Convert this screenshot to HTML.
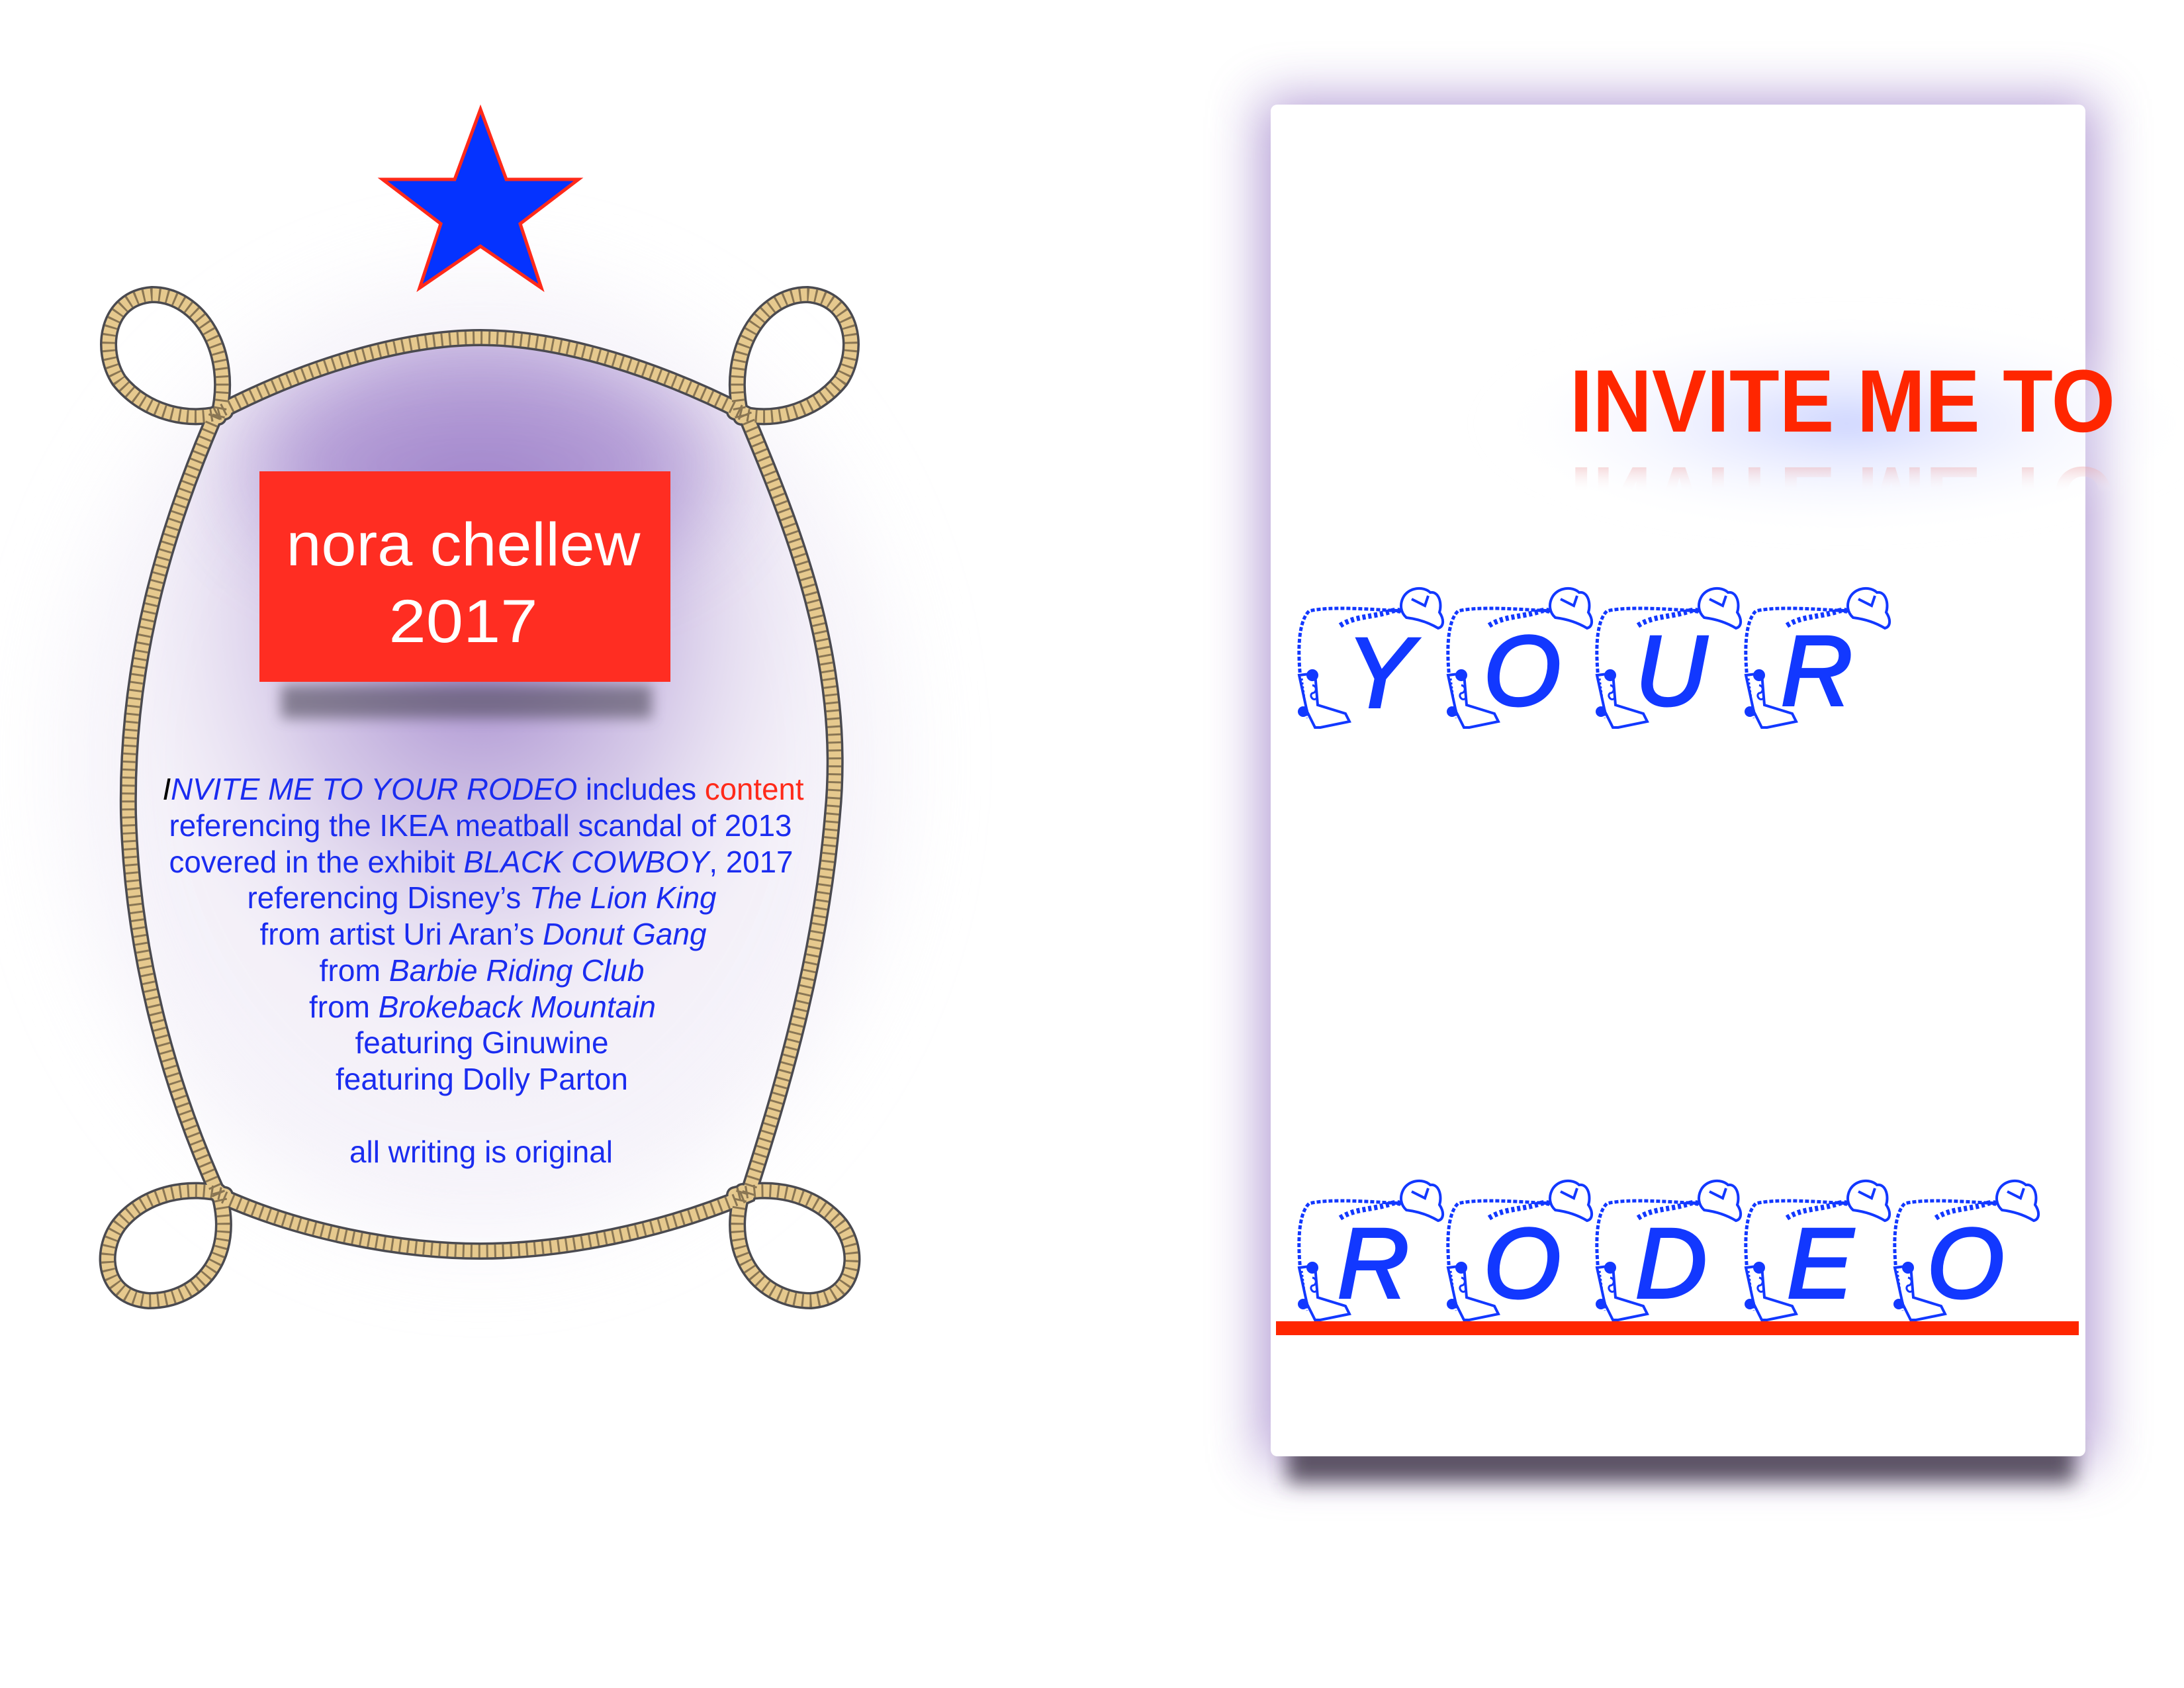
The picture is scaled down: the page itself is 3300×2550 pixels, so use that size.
<!DOCTYPE html>
<html><head><meta charset="utf-8"><style>
html,body{margin:0;padding:0;background:#fff;}
svg{display:block;}
</style></head><body>
<svg width="3300" height="2550" viewBox="0 0 3300 2550" xmlns="http://www.w3.org/2000/svg">
<defs>
  <filter id="b40" x="-50%" y="-50%" width="200%" height="200%"><feGaussianBlur stdDeviation="40"/></filter>
  <filter id="b70" x="-50%" y="-50%" width="200%" height="200%"><feGaussianBlur stdDeviation="70"/></filter>
  <filter id="b15" x="-50%" y="-50%" width="200%" height="200%"><feGaussianBlur stdDeviation="15"/></filter>
  <filter id="b10" x="-50%" y="-50%" width="200%" height="200%"><feGaussianBlur stdDeviation="10"/></filter>
  <path id="oval" d="M326 625 C450 560 600 510 726 510 C850 510 1000 560 1126 625 C1200 800 1280 1000 1258 1230 C1240 1450 1180 1650 1130 1805 C1000 1860 850 1890 726 1890 C600 1890 450 1860 330 1805 C260 1650 200 1450 194 1230 C190 1000 250 800 326 625 Z"/>
  <clipPath id="ovalclip"><use href="#oval"/></clipPath>
  <radialGradient id="ovalg" cx="0.5" cy="0.3" r="0.65">
    <stop offset="0" stop-color="#8d6bc0" stop-opacity="0.9"/>
    <stop offset="0.4" stop-color="#b7a2d8" stop-opacity="0.5"/>
    <stop offset="0.7" stop-color="#e8e0f2" stop-opacity="0.12"/>
    <stop offset="1" stop-color="#ffffff" stop-opacity="0"/>
  </radialGradient>
  <radialGradient id="bluegl" cx="0.5" cy="0.5" r="0.5">
    <stop offset="0" stop-color="#c8d0ff" stop-opacity="0.9"/>
    <stop offset="1" stop-color="#ffffff" stop-opacity="0"/>
  </radialGradient>
  <linearGradient id="refl" x1="0" y1="0" x2="0" y2="1">
    <stop offset="0.55" stop-color="#ffffff" stop-opacity="0"/>
    <stop offset="1" stop-color="#e06a6a" stop-opacity="0.75"/>
  </linearGradient>
  <g id="tile">
    <path d="M12 140 C8 100 8 55 25 38 C60 30 120 36 168 38" fill="none" stroke="#1238ff" stroke-width="5" stroke-dasharray="6 3"/>
    <path d="M72 60 C95 45 120 48 150 38 C160 35 165 40 170 38" fill="none" stroke="#1238ff" stroke-width="8" stroke-dasharray="5 4"/>
    <path d="M167 18 C175 2 198 0 208 10 C222 8 226 28 222 40 C230 52 228 62 220 64 C205 55 188 50 172 48 C163 40 162 28 167 18Z" fill="#fff" stroke="#1238ff" stroke-width="4"/>
    <path d="M180 20 L200 30 L205 15" fill="none" stroke="#1238ff" stroke-width="4"/>
    <path d="M10 135 L34 132 L38 180 L80 193 L86 205 L42 214 L34 214 L22 190 Z" fill="#fff" stroke="#1238ff" stroke-width="4"/>
    <path d="M30 150 C38 152 36 162 30 162 C24 166 32 175 36 170" fill="none" stroke="#1238ff" stroke-width="3"/>
    <path d="M14 140 L22 200" stroke="#1238ff" stroke-width="3" stroke-dasharray="3 3"/>
    <circle cx="16" cy="190" r="6" fill="#1238ff"/>
    <circle cx="30" cy="135" r="7" fill="#1238ff"/>
  </g>
</defs>

<ellipse cx="726" cy="1150" rx="620" ry="720" fill="#ede8f5" opacity="0.55" filter="url(#b70)"/>
<g clip-path="url(#ovalclip)">
  <rect x="150" y="480" width="1150" height="1450" fill="url(#ovalg)"/>
  <ellipse cx="726" cy="700" rx="360" ry="170" fill="#8a66c0" opacity="0.45" filter="url(#b70)"/>
</g>
<rect x="425" y="1035" width="560" height="50" fill="#4e4858" opacity="0.6" filter="url(#b10)"/>

<g fill="none" stroke-linecap="round">
  <g stroke="#4a4a50" stroke-width="26">
    <use href="#oval"/>
    <path d="M330 630 C355 530 300 445 230 445 C160 450 150 530 180 575 C220 625 290 640 340 622"/>
    <path d="M1120 630 C1095 530 1150 445 1220 445 C1290 450 1300 530 1270 575 C1230 625 1160 640 1110 622"/>
    <path d="M330 1800 C360 1900 300 1965 225 1965 C155 1960 150 1890 180 1850 C220 1800 290 1790 340 1805"/>
    <path d="M1122 1800 C1092 1900 1152 1965 1225 1965 C1295 1960 1300 1890 1270 1850 C1230 1800 1160 1790 1110 1805"/>
  </g>
  <g stroke="#e6c98e" stroke-width="19">
    <use href="#oval"/>
    <path d="M330 630 C355 530 300 445 230 445 C160 450 150 530 180 575 C220 625 290 640 340 622"/>
    <path d="M1120 630 C1095 530 1150 445 1220 445 C1290 450 1300 530 1270 575 C1230 625 1160 640 1110 622"/>
    <path d="M330 1800 C360 1900 300 1965 225 1965 C155 1960 150 1890 180 1850 C220 1800 290 1790 340 1805"/>
    <path d="M1122 1800 C1092 1900 1152 1965 1225 1965 C1295 1960 1300 1890 1270 1850 C1230 1800 1160 1790 1110 1805"/>
  </g>
  <g stroke="#6a5a40" stroke-width="19" stroke-dasharray="3 9" opacity="0.75" stroke-linecap="butt">
    <use href="#oval"/>
    <path d="M330 630 C355 530 300 445 230 445 C160 450 150 530 180 575 C220 625 290 640 340 622"/>
    <path d="M1120 630 C1095 530 1150 445 1220 445 C1290 450 1300 530 1270 575 C1230 625 1160 640 1110 622"/>
    <path d="M330 1800 C360 1900 300 1965 225 1965 C155 1960 150 1890 180 1850 C220 1800 290 1790 340 1805"/>
    <path d="M1122 1800 C1092 1900 1152 1965 1225 1965 C1295 1960 1300 1890 1270 1850 C1230 1800 1160 1790 1110 1805"/>
  </g>
</g>

<polygon points="726,165 765,271 874,271 786,338 818,435 726,372 634,435 666,338 578,271 687,271" fill="#0533ff" stroke="#ff2a1a" stroke-width="5"/>

<rect x="392" y="712" width="621" height="318" fill="#ff2d22"/>
<g font-family="'Liberation Sans',sans-serif" fill="#fff" font-size="92" text-anchor="middle">
  <text x="700" y="854" textLength="535" lengthAdjust="spacingAndGlyphs">nora chellew</text>
  <text x="700" y="970" textLength="225" lengthAdjust="spacingAndGlyphs">2017</text>
</g>

<g font-family="'Liberation Sans',sans-serif" font-size="46" fill="#1a2cf0" text-anchor="middle">
  <text x="730" y="1208" textLength="969" lengthAdjust="spacingAndGlyphs"><tspan fill="#000" font-style="italic">I</tspan><tspan font-style="italic">NVITE ME TO YOUR RODEO</tspan> includes <tspan fill="#ff2a1a">content</tspan></text>
  <text x="726" y="1263" textLength="941" lengthAdjust="spacingAndGlyphs">referencing the IKEA meatball scandal of 2013</text>
  <text x="727" y="1318" textLength="943" lengthAdjust="spacingAndGlyphs">covered in the exhibit <tspan font-style="italic">BLACK COWBOY</tspan>, 2017</text>
  <text x="728" y="1372" textLength="709" lengthAdjust="spacingAndGlyphs">referencing Disney’s <tspan font-style="italic">The Lion King</tspan></text>
  <text x="730" y="1427" textLength="675" lengthAdjust="spacingAndGlyphs">from artist Uri Aran’s <tspan font-style="italic">Donut Gang</tspan></text>
  <text x="728" y="1482" textLength="491" lengthAdjust="spacingAndGlyphs">from <tspan font-style="italic">Barbie Riding Club</tspan></text>
  <text x="729" y="1537" textLength="524" lengthAdjust="spacingAndGlyphs">from <tspan font-style="italic">Brokeback Mountain</tspan></text>
  <text x="728" y="1591" textLength="383" lengthAdjust="spacingAndGlyphs">featuring Ginuwine</text>
  <text x="728" y="1646" textLength="442" lengthAdjust="spacingAndGlyphs">featuring Dolly Parton</text>
  <text x="727" y="1756" textLength="398" lengthAdjust="spacingAndGlyphs">all writing is original</text>
</g>

<rect x="1905" y="150" width="1262" height="2060" fill="#8a68be" opacity="0.65" filter="url(#b40)"/>
<rect x="1945" y="2175" width="1190" height="65" fill="#3c3444" opacity="0.8" filter="url(#b15)"/>
<rect x="1920" y="158" width="1231" height="2042" rx="10" fill="#fff"/>
<ellipse cx="2790" cy="640" rx="560" ry="170" fill="url(#bluegl)" filter="url(#b15)"/>

<g font-family="'Liberation Sans',sans-serif" font-weight="bold" font-size="134">
  <text x="2372" y="652" fill="#ff2600" textLength="824" lengthAdjust="spacingAndGlyphs">INVITE ME TO</text>
  <g transform="translate(0,1358) scale(1,-1)">
    <text x="2372" y="652" fill="url(#refl)" textLength="824" lengthAdjust="spacingAndGlyphs">INVITE ME TO</text>
  </g>
</g>

<g font-family="'Liberation Sans',sans-serif" font-style="italic" font-size="150" fill="#1238ff" stroke="#1238ff" stroke-width="4" text-anchor="middle">
  <use href="#tile" x="1953" y="885"/><text x="2085" y="1068">Y</text>
  <use href="#tile" x="2178" y="885"/><text x="2300" y="1065">O</text>
  <use href="#tile" x="2403" y="885"/><text x="2525" y="1065">U</text>
  <use href="#tile" x="2628" y="885"/><text x="2745" y="1065">R</text>

  <use href="#tile" x="1953" y="1780"/><text x="2075" y="1960">R</text>
  <use href="#tile" x="2178" y="1780"/><text x="2300" y="1960">O</text>
  <use href="#tile" x="2403" y="1780"/><text x="2525" y="1960">D</text>
  <use href="#tile" x="2628" y="1780"/><text x="2750" y="1960">E</text>
  <use href="#tile" x="2853" y="1780"/><text x="2970" y="1960">O</text>
</g>

<rect x="1928" y="1996" width="1213" height="21" fill="#ff2600"/>
</svg>
</body></html>
